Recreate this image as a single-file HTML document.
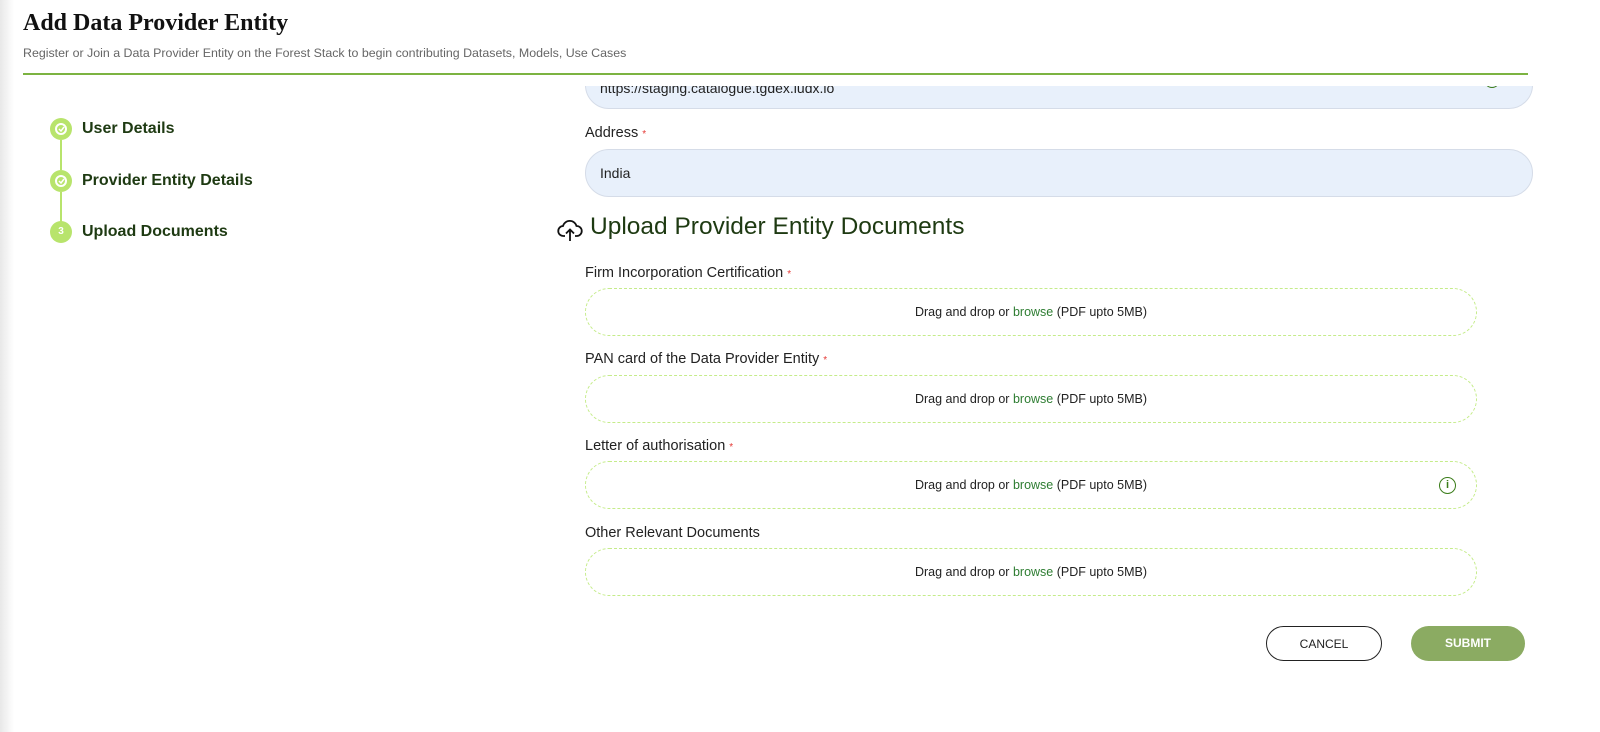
<!DOCTYPE html>
<html><head><meta charset="utf-8"><style>
*{box-sizing:border-box;margin:0;padding:0}
body{width:1600px;height:732px;overflow:hidden;background:#fff;font-family:"Liberation Sans",sans-serif;position:relative;color:#1a1a1a}
.edge{position:absolute;left:0;top:0;width:14px;height:732px;background:linear-gradient(90deg,#e8e8e8,#fff)}
h1{position:absolute;left:23px;top:10px;font-family:"Liberation Serif",serif;font-size:24px;font-weight:bold;color:#111}
.sub{position:absolute;left:23px;top:46px;font-size:12.4px;color:#666}
.rule{position:absolute;left:23px;top:73px;width:1505px;height:2px;background:#7cb341}
.step{position:absolute;left:50px;width:300px;height:22px}
.step .c{position:absolute;left:0;top:0;width:22px;height:22px;border-radius:50%;background:#b8e46c;color:#fff;font-size:10px;font-weight:bold;text-align:center;line-height:22px}
.step .t{position:absolute;left:32px;top:2px;font-size:16px;font-weight:bold;color:#1e3a12}
.vl{position:absolute;left:60px;width:2px;background:#b8e46c}
.field{position:absolute;left:585px;width:948px;background:#e8f0fb;border:1px solid #d5dce8;border-radius:24px;font-size:14px;color:#222;padding-left:14px}
.lab{position:absolute;left:585px;font-size:14.5px;color:#222}
.lab b{color:#e53935;font-weight:normal;font-size:10px}
.dz{position:absolute;left:585px;width:892px;height:48px;border:1px dashed #c5ec8a;border-radius:24px;font-size:12.5px;text-align:center;line-height:46px;color:#222}
.dz span{color:#2e7d32}
.btn{position:absolute;top:626px;height:35px;border-radius:18px;font-size:12px;text-align:center;line-height:34px}
</style></head><body>
<div class="edge"></div>

<div class="field" style="top:30px;height:79px;line-height:114px;overflow:hidden">https://staging.catalogue.tgdex.iudx.io</div>
<div style="position:absolute;left:1484px;top:76px;width:16px;height:18px;overflow:hidden"><div style="width:16px;height:16px;border:1.5px solid #3b7d1a;border-radius:50%;margin-top:-4px"></div></div>
<div style="position:absolute;left:0;top:0;width:1600px;height:86px;background:#fff"></div>
<div class="edge" style="height:86px"></div>
<h1>Add Data Provider Entity</h1>
<div class="sub">Register or Join a Data Provider Entity on the Forest Stack to begin contributing Datasets, Models, Use Cases</div>
<div class="rule"></div>

<div class="vl" style="top:140px;height:30px"></div>
<div class="vl" style="top:192px;height:30px"></div>
<div class="step" style="top:118px"><div class="c"><svg width="22" height="22" viewBox="0 0 22 22"><circle cx="11" cy="11" r="5" fill="none" stroke="#fff" stroke-width="2"/><path d="M9 11l2 2 3-4" fill="none" stroke="#fff" stroke-width="1.5"/></svg></div><div class="t">User Details</div></div>
<div class="step" style="top:170px"><div class="c"><svg width="22" height="22" viewBox="0 0 22 22"><circle cx="11" cy="11" r="5" fill="none" stroke="#fff" stroke-width="2"/><path d="M9 11l2 2 3-4" fill="none" stroke="#fff" stroke-width="1.5"/></svg></div><div class="t">Provider Entity Details</div></div>
<div class="step" style="top:221px"><div class="c">3</div><div class="t">Upload Documents</div></div>

<div class="lab" style="top:125px">Address <b>*</b></div>
<div class="field" style="top:149px;height:48px;line-height:46px">India</div>

<svg style="position:absolute;left:557px;top:218px" width="26" height="24" viewBox="0 0 26 24"><path d="M8 18H6.5a5 5 0 0 1-.5-10A7 7 0 0 1 19.5 8a5 5 0 0 1 .5 10H18" fill="none" stroke="#111" stroke-width="1.8"/><path d="M13 23V12M9 15.5l4-4 4 4" fill="none" stroke="#111" stroke-width="1.8"/></svg>
<div style="position:absolute;left:590px;top:213px;font-size:24.5px;color:#1e3a12">Upload Provider Entity Documents</div>

<div class="lab" style="top:265px">Firm Incorporation Certification <b>*</b></div>
<div class="dz" style="top:288px">Drag and drop or <span>browse</span> (PDF upto 5MB)</div>
<div class="lab" style="top:351px">PAN card of the Data Provider Entity <b>*</b></div>
<div class="dz" style="top:375px">Drag and drop or <span>browse</span> (PDF upto 5MB)</div>
<div class="lab" style="top:438px">Letter of authorisation <b>*</b></div>
<div class="dz" style="top:461px">Drag and drop or <span>browse</span> (PDF upto 5MB)</div>
<div style="position:absolute;left:1439px;top:477px;width:17px;height:17px;border:1.5px solid #3b7d1a;border-radius:50%;color:#3b7d1a;font-size:11px;text-align:center;line-height:14px;font-weight:bold">i</div>
<div class="lab" style="top:525px">Other Relevant Documents</div>
<div class="dz" style="top:548px">Drag and drop or <span>browse</span> (PDF upto 5MB)</div>

<div class="btn" style="left:1266px;width:116px;border:1px solid #222;color:#222">CANCEL</div>
<div class="btn" style="left:1411px;width:114px;background:#8bab62;color:#fff;font-weight:bold">SUBMIT</div>
</body></html>
